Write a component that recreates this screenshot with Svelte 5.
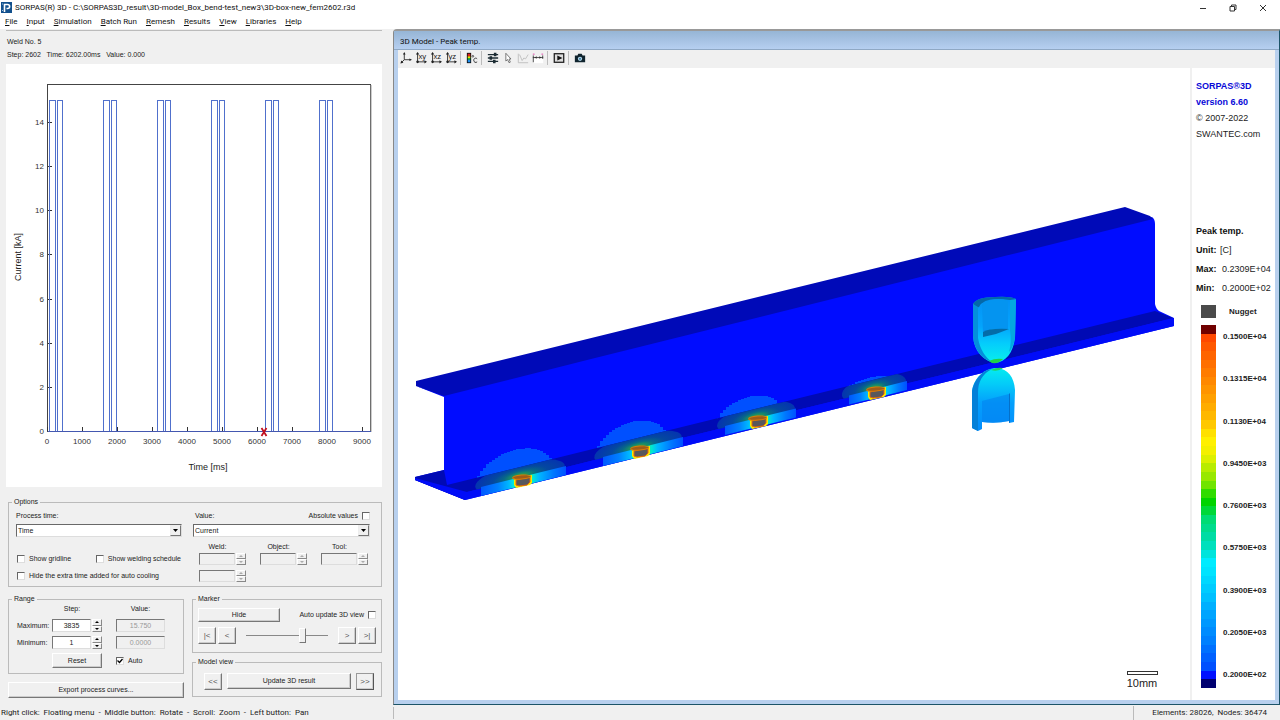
<script>
  // Menu titles as [access key, rest of the word]
  const menus = [
    ['F', 'ile'], ['I', 'nput'], ['S', 'imulation'], ['B', 'atch Run'], ['R', 'emesh'],
    ['R', 'esults'], ['V', 'iew'], ['L', 'ibraries'], ['H', 'elp']
  ];

  // Process curve
  const px = (ms) => 47 + ms * 0.035;
  const py = (ka) => 432 - ka * 22.07;
  const xTicks = [0, 1000, 2000, 3000, 4000, 5000, 6000, 7000, 8000, 9000];
  const yTicks = [0, 2, 4, 6, 8, 10, 12, 14];
  const pulses = [0, 1, 2, 3, 4, 5].flatMap((i) => [
    { x: 49.5 + i * 54, w: 6 },
    { x: 57.5 + i * 54, w: 5 }
  ]);

  // Heat plumes, stepped like the mesh
  function plume(cx, cy, rx, ry) {
    const pts = [];
    for (let x = -rx; x <= rx; x += 3) {
      const h = ry * Math.sqrt(Math.max(0, 1 - (x * x) / (rx * rx)));
      const y = Math.round(cy - 0.247 * x - h);
      pts.push(`${cx + x},${y}`, `${cx + x + 3},${y}`);
    }
    pts.push(`${cx + rx},${cy + 14}`, `${cx - rx},${cy + 14}`);
    return pts.join(' ');
  }
  const welds = [
    { x: 523, y: 481, left: 42, right: 43, plume: plume(513, 478, 39, 28) },
    { x: 641, y: 452, left: 38, right: 42, plume: plume(630, 449, 36, 27) },
    { x: 759, y: 422, left: 34, right: 37, plume: plume(747, 420, 33, 23) },
    { x: 877, y: 393, left: 28, right: 30, plume: plume(867, 389, 27, 11) }
  ];
  const edge = (w, dx, dy) => `${w.x + dx} ${(w.y - 4.5 - dx * 0.247 + dy).toFixed(1)}`;

  const scale = [
    '#700000', '#ff4800', '#ff5800', '#ff6400', '#ff7000', '#ff7c00', '#ff8800', '#ff9400', '#ffa000',
    '#ffac00', '#ffb800', '#ffc800', '#ffe000', '#fff000', '#f4f000', '#dcf000', '#b8ec00', '#98e800',
    '#70e400', '#30dc00', '#00d400', '#00d838', '#00dc74', '#00dc8c', '#00dca4', '#00e0bc', '#00e4dc',
    '#00ecff', '#00e4ff', '#00d8ff', '#00ccff', '#00c0ff', '#00b0ff', '#00a4ff', '#0098ff', '#008cff',
    '#0080ff', '#0070ff', '#0060ff', '#0050ff', '#0010ff', '#000070'
  ];
  const scaleLabels = [
    '0.1500E+04', '0.1315E+04', '0.1130E+04', '0.9450E+03', '0.7600E+03',
    '0.5750E+03', '0.3900E+03', '0.2050E+03', '0.2000E+02'
  ];
</script>

{#snippet spinner(label, value, disabled)}
  <span class="spinner" class:disabled>
    <input type="text" aria-label={label} {value} {disabled} />
    <span class="arrows">
      <button {disabled} aria-label="{label} up"><svg viewBox="0 0 6 4"><path d="M1 3L3 1L5 3Z" /></svg></button>
      <button {disabled} aria-label="{label} down"><svg viewBox="0 0 6 4"><path d="M1 1L3 3L5 1Z" /></svg></button>
    </span>
  </span>
{/snippet}

{#snippet plane(label)}
  <svg viewBox="0 0 14 14">
    <path d="M3 1.5V11.5H12.5" fill="none" stroke="#222" stroke-width="1" />
    <path d="M3 0L1 3H5ZM14 11.5L11 9.5V13.5Z" fill="#222" />
    <circle cx="3" cy="11.5" r="1.5" fill="#222" />
    <text x="4" y="8" font-size="9" fill="#222">{label}</text>
  </svg>
{/snippet}

<div class="app">
  <header class="titlebar">
    <svg class="logo" viewBox="0 0 11 11">
      <rect width="11" height="11" fill="#12508c" />
      <path d="M3.5 10V2.5H6.5C9.3 2.5 9.3 6.5 6.5 6.5H5.5" fill="none" stroke="#fff" stroke-width="1.6" />
      <path d="M1 2H2M1 8.5H2" stroke="#9cc4e8" />
    </svg>
    <h1>SORPAS(R) 3D - C:\SORPAS3D_result\3D-model_Box_bend-test_new3\3D-box-new_fem2602.r3d</h1>
    <div class="window-buttons">
      <button aria-label="Minimize"><svg viewBox="0 0 8 8"><path d="M1 4.5H7" /></svg></button>
      <button aria-label="Restore"><svg viewBox="0 0 8 8"><path d="M1 2.5H5.5V7H1ZM2.5 2.5V1H7V5.5H5.5" /></svg></button>
      <button aria-label="Close"><svg viewBox="0 0 8 8"><path d="M1 1L7 7M7 1L1 7" /></svg></button>
    </div>
  </header>

  <nav class="menubar">
    {#each menus as [key, rest]}
      <button><u>{key}</u>{rest}</button>
    {/each}
  </nav>

  <main>
    <section class="process">
      <div class="info">
        <p>Weld No. 5</p>
        <p>Step: 2602&nbsp;&nbsp; Time: 6202.00ms&nbsp;&nbsp; Value: 0.000</p>
      </div>

      <div class="chart">
        <svg viewBox="6 64 376 423">
          <rect x="47.5" y="84.5" width="323" height="347" fill="none" stroke="#444" />
          <path d="M371 85V432" stroke="#999" />
          {#each yTicks as t}
            <path d="M48 {Math.round(py(t)) - 0.5}h4" stroke="#333" />
            <text x="44" y={py(t) + 2} text-anchor="end">{t}</text>
          {/each}
          {#each xTicks as t}
            <path d="M{Math.round(px(t)) + 0.5} 431v-4" stroke="#333" />
            <text x={px(t)} y="444" text-anchor="middle">{t}</text>
          {/each}
          {#each pulses as p}
            <rect x={p.x} y="100.5" width={p.w} height="331" fill="none" stroke="#5070cc" />
          {/each}
          <path d="M48 431.5H371" stroke="#4458b0" />
          <path d="M261.5 428L266.5 436M266.5 428L261.5 436" stroke="#c01020" stroke-width="1.8" />
          <text class="axis" x="208" y="470" text-anchor="middle">Time [ms]</text>
          <text class="axis" transform="translate(21 257) rotate(-90)" text-anchor="middle">Current [kA]</text>
        </svg>
      </div>

      <fieldset class="options">
        <legend>Options</legend>
        <div class="option-cols">
          <div class="col">
            <label class="caption" for="process-time">Process time:</label>
            <span class="dropdown">
              <select id="process-time"><option>Time</option></select>
              <span class="drop"><svg viewBox="0 0 7 5"><path d="M1 1H6L3.5 4Z" /></svg></span>
            </span>
            <div class="checks">
              <label class="check"><input type="checkbox" />Show gridline</label>
              <label class="check"><input type="checkbox" />Show welding schedule</label>
            </div>
            <label class="check"><input type="checkbox" />Hide the extra time added for auto cooling</label>
          </div>
          <div class="col">
            <div class="value-head">
              <label class="caption" for="value-kind">Value:</label>
              <label class="check">Absolute values<input type="checkbox" /></label>
            </div>
            <span class="dropdown">
              <select id="value-kind"><option>Current</option></select>
              <span class="drop"><svg viewBox="0 0 7 5"><path d="M1 1H6L3.5 4Z" /></svg></span>
            </span>
            <div class="selectors">
              <span class="head">Weld:</span><span class="head">Object:</span><span class="head">Tool:</span>
              {@render spinner('Weld', '', true)}
              {@render spinner('Object', '', true)}
              {@render spinner('Tool', '', true)}
            </div>
            <div class="selectors">{@render spinner('Weld end', '', true)}</div>
          </div>
        </div>
      </fieldset>

      <div class="lower">
        <div class="stack">
          <fieldset>
            <legend>Range</legend>
            <div class="range">
              <span></span><span class="head">Step:</span><span class="head">Value:</span>
              <span>Maximum:</span>{@render spinner('Maximum step', '3835', false)}
              <input class="readout" aria-label="Maximum value" value="15.750" disabled />
              <span>Minimum:</span>{@render spinner('Minimum step', '1', false)}
              <input class="readout" aria-label="Minimum value" value="0.0000" disabled />
              <span></span><button class="push">Reset</button>
              <label class="check"><input type="checkbox" checked />Auto</label>
            </div>
          </fieldset>
          <button class="push export">Export process curves...</button>
        </div>
        <div class="stack">
          <fieldset>
            <legend>Marker</legend>
            <div class="marker">
              <div class="row">
                <button class="push hide">Hide</button>
                <label class="check">Auto update 3D view<input type="checkbox" /></label>
              </div>
              <div class="row">
                <span class="pair"><button class="push step">|&lt;</button><button class="push step">&lt;</button></span>
                <input class="slider" type="range" min="0" max="100" value="70" aria-label="Marker position" />
                <span class="pair"><button class="push step">&gt;</button><button class="push step">&gt;|</button></span>
              </div>
            </div>
          </fieldset>
          <fieldset>
            <legend>Model view</legend>
            <div class="model">
              <button class="push step">&lt;&lt;</button>
              <button class="push update">Update 3D result</button>
              <button class="push step strong">&gt;&gt;</button>
            </div>
          </fieldset>
        </div>
      </div>
    </section>

    <section class="viewer">
      <h2>3D Model - Peak temp.</h2>
      <div class="toolbar">
        <button aria-label="3D view">
          <svg viewBox="0 0 14 14"><path d="M5 1.5V9H12M5 9L2 12" fill="none" stroke="#222" /><path d="M5 0L3.5 3H6.5ZM14 9L11 7.5V10.5ZM0.5 13.5L1.5 10L4 12.5Z" fill="#222" /></svg>
        </button>
        <button aria-label="XY view">{@render plane('xy')}</button>
        <button aria-label="XZ view">{@render plane('xz')}</button>
        <button aria-label="YZ view">{@render plane('yz')}</button>
        <i></i>
        <button aria-label="Temperature scale">
          <svg viewBox="0 0 14 14">
            <rect x="1" y="1" width="5" height="12" fill="#111" /><rect x="2" y="2" width="3" height="3" fill="#e02020" />
            <rect x="2" y="5" width="3" height="2" fill="#f0e000" /><rect x="2" y="7" width="3" height="2" fill="#20c030" /><rect x="2" y="9" width="3" height="3" fill="#2090f0" />
            <circle cx="8" cy="5" r="1" fill="none" stroke="#222" stroke-width=".8" /><path d="M13 8C11 6 9 8 9 9.5C9 12 11.5 13 13 11.5" fill="none" stroke="#222" />
          </svg>
        </button>
        <i></i>
        <button aria-label="Settings">
          <svg viewBox="0 0 14 14"><path d="M1 3H13M1 7H13M1 11H13" stroke="#1c2c34" stroke-width="1.5" /><path d="M8 1h3v4h-3ZM3 5h3v4h-3ZM7 9h3v4h-3Z" fill="#1c2c34" /></svg>
        </button>
        <button aria-label="Select">
          <svg viewBox="0 0 14 14"><path d="M4.5 1.5V10.5L6.5 8.8L8.2 12.5L9.7 11.8L8.2 8.2H10.5Z" fill="#fff" stroke="#666" /></svg>
        </button>
        <button aria-label="Curve">
          <svg viewBox="0 0 14 14"><path d="M1.5 2V12.5H13M3 3L6 10L8 7L10 8L13 3" fill="none" stroke="#bbb" /></svg>
        </button>
        <button aria-label="Measure">
          <svg viewBox="0 0 14 14"><rect x="1" y="7" width="12" height="6" fill="#fff" /><path d="M1.5 4V12M12.5 4V8M1 6.5H13" stroke="#333" fill="none" /><path d="M3 6.5L5.5 5V8ZM11 6.5L8.5 5V8Z" fill="#333" /><path d="M1 2.5H3M11 2.5H13" stroke="#e030a0" /></svg>
        </button>
        <i></i>
        <button aria-label="Play">
          <svg viewBox="0 0 14 14"><rect x="1.5" y="2" width="11" height="10" fill="#ddd" stroke="#222" stroke-width="1.5" /><path d="M5 4L11 7L5 10Z" fill="#111" /></svg>
        </button>
        <i></i>
        <button aria-label="Snapshot">
          <svg viewBox="0 0 14 14"><path d="M1 4H4L5 2H9L10 4H13V12H1Z" fill="#10242e" /><circle cx="7" cy="8" r="2.5" fill="#b8dcf0" /><circle cx="7" cy="8" r="1.2" fill="#3a7a9c" /></svg>
        </button>
      </div>

      <div class="stage">
        <svg class="scene" viewBox="398 68 792 632">
          <defs>
            <linearGradient id="front">
              <stop offset="0" stop-color="#0058ff" /><stop offset=".2" stop-color="#0080ff" />
              <stop offset=".33" stop-color="#00b8ff" /><stop offset=".38" stop-color="#00e8e0" />
              <stop offset=".5" stop-color="#40f060" /><stop offset=".61" stop-color="#00e8d0" />
              <stop offset=".68" stop-color="#00b8ff" /><stop offset=".85" stop-color="#0078ff" /><stop offset="1" stop-color="#0050ff" />
            </linearGradient>
            <radialGradient id="glow">
              <stop offset="0" stop-color="#58a030" /><stop offset=".2" stop-color="#188c68" />
              <stop offset=".36" stop-color="#086888" /><stop offset=".6" stop-color="#0448a0" /><stop offset="1" stop-color="#0434b0" />
            </radialGradient>
            <linearGradient id="upper" x2="0" y2="1">
              <stop offset="0" stop-color="#0490f4" /><stop offset=".45" stop-color="#04a4fc" />
              <stop offset=".7" stop-color="#04ccfc" /><stop offset="1" stop-color="#08f0ec" />
            </linearGradient>
            <linearGradient id="lower" x2="0" y2="1">
              <stop offset="0" stop-color="#04ecf0" /><stop offset=".25" stop-color="#04ccf8" />
              <stop offset=".55" stop-color="#04a0fc" /><stop offset="1" stop-color="#048cfc" />
            </linearGradient>
            <clipPath id="flange-clip"><path d="M415 477L444 470L447 485L690 425L950 361L1155 311L1173 318L950 373L690 436L467 492Z" /></clipPath>
            <clipPath id="web-clip"><path d="M444 396L1155 219V311L950 363L690 427L447 487Z" /></clipPath>
          </defs>

          <path d="M416 386L444 394L1152 217Q1155 219 1155 224V304Q1156 309 1159 311L1174 318V326L465 500L415 480V477L444 470V397Z" fill="#000cff" />
          <path d="M416 381L1125 207L1150 216L1153 219L591 359L444 396L416 386Z" fill="#000ab8" />
          <g clip-path="url(#web-clip)">
            {#each welds as w}
              <polygon points={w.plume} fill="#0050ff" />
            {/each}
          </g>
          <path d="M415 477L444 470L447 485L690 425L950 361L1155 311L1173 318L950 373L690 436L467 492L465 500L415 480Z" fill="#000ab4" />
          <path d="M415 478L467 492L465 500L415 480ZM467 492L690 436L950 373L1174 318V326L465 500Z" fill="#000cf8" />

          <g clip-path="url(#flange-clip)">
            {#each welds as w}
              <ellipse cx={w.x - 3} cy={w.y - 5} rx={w.right + 3} ry="13" transform="rotate(-14 {w.x - 3} {w.y - 5})" fill="url(#glow)" />
            {/each}
          </g>
          {#each welds as w}
            <path d="M{edge(w, -w.left, 0)}L{edge(w, w.right, 0)}L{edge(w, w.right, 9)}L{edge(w, -w.left, 9)}Z" fill="url(#front)" />
            <path d="M{w.x - 9} {w.y - 3}L{w.x + 9} {w.y - 6}V{w.y + 2}L{w.x + 7} {w.y + 4}L{w.x - 7} {w.y + 7}L{w.x - 9} {w.y + 4}Z" fill="#f8e800" />
            <path d="M{w.x - 7} {w.y - 1}L{w.x + 7} {w.y - 4}V{w.y + 1}L{w.x + 4} {w.y + 4}L{w.x - 4} {w.y + 5}L{w.x - 7} {w.y + 4}Z" fill="#58585c" stroke="#e06010" />
            <ellipse cx={w.x - 1} cy={w.y - 4} rx="9" ry="2" transform="rotate(-5 {w.x} {w.y})" fill="#a05c18" stroke="#d87c08" />
          {/each}

          <path d="M973 304Q977 297 995 297Q1010 296 1016 299L1015 338C1013 353 1006 362 995 363C984 361 974 352 973 336Z" fill="url(#upper)" />
          <path d="M973 304Q977 297 995 297Q1010 296 1016 299L1010 300Q984 296 979 307Q975 308 973 304Z" fill="#0468a8" />
          <path d="M973 304L978 307V338C980 350 986 358 992 362C982 359 974 350 973 336Z" fill="#0490dc" />
          <path d="M1010 300H1016L1015 338Q1013 348 1009 352Q1012 342 1010 330Z" fill="#04a8e0" />
          <path d="M982 304Q996 296 1008 301V329H992L983 333Z" fill="#0494f0" />
          <path d="M983 332Q989 328 1009 329L996 334L983 337Z" fill="#046ca8" />
          <path d="M989 361Q995 358 1003 359Q999 364 992 363Z" fill="#20d048" />

          <path d="M972 428V391C974 378 984 368 997 368C1008 369 1014 377 1015 390L1014 422L1009 423V421Q996 424 982 422V429L978 431Z" fill="url(#lower)" />
          <path d="M972 428V391C974 380 982 370 992 369C982 374 978 382 978 393V431Z" fill="#0480d8" />
          <path d="M982 401L1009 394V421Q996 424 982 422Z" fill="#0484f0" opacity=".6" />
          <path d="M1009 394V423L1010 422V393Z" fill="#0470c8" />
          <path d="M991 370Q997 367 1003 368Q998 372 991 370Z" fill="#20d060" />

          <rect x="1127.5" y="671.5" width="30" height="3" fill="#fff" stroke="#333" />
          <text x="1142" y="687" text-anchor="middle" font-size="11" fill="#222">10mm</text>
        </svg>

        <aside>
          <div class="brand">
            <strong>SORPAS®3D</strong><strong>version 6.60</strong>
            <span>© 2007-2022</span><span>SWANTEC.com</span>
          </div>
          <dl>
            <dt class="wide">Peak temp.</dt>
            <dt>Unit:</dt><dd class="unit">[C]</dd>
            <dt>Max:</dt><dd>0.2309E+04</dd>
            <dt>Min:</dt><dd>0.2000E+02</dd>
          </dl>
          <div class="nugget"><span></span><b>Nugget</b></div>
          <div class="scale">
            <div class="bar">{#each scale as c}<span style="background:{c}"></span>{/each}</div>
            <div class="labels">{#each scaleLabels as l}<b>{l}</b>{/each}</div>
          </div>
        </aside>
      </div>
    </section>
  </main>

  <footer>
    <span class="hint">Right click:&nbsp; Floating menu&nbsp; -&nbsp; Middle button:&nbsp; Rotate&nbsp; -&nbsp; Scroll:&nbsp; Zoom&nbsp; -&nbsp; Left button:&nbsp; Pan</span>
    <span class="cell"></span>
    <span class="counts">Elements: 28026,&nbsp; Nodes: 36474</span>
  </footer>
</div>

<style>
  :global(body) { margin: 0; }
  * { box-sizing: border-box; }
  .app {
    display: flex;
    flex-direction: column;
    min-height: 100vh;
    background: #f0f0f0;
    color: #222;
    font: 7px/10px 'Liberation Sans', Arial, sans-serif;
  }
  button, input, select { font: inherit; color: inherit; margin: 0; padding: 0; border: 0; border-radius: 0; }
  h1, h2, p, dl, dd { margin: 0; }
  svg { display: block; }

  .titlebar, .menubar { display: flex; align-items: center; background: #fff; }
  .titlebar, .menubar, footer, h2 { font: 8px/14px Roboto, 'Noto Sans', sans-serif; }
  .titlebar { height: 15px; padding-left: 1px; }
  .logo { width: 11px; height: 11px; }
  h1 { font: inherit; margin-left: 3px; flex: 1; color: #111; }
  .window-buttons { display: flex; padding-right: 2px; }
  .window-buttons button { width: 30px; height: 14px; display: grid; place-items: center; background: none; }
  .window-buttons svg { width: 8px; height: 8px; fill: none; stroke: #333; }
  .menubar { height: 14px; gap: 9px; padding-left: 5px; }
  .menubar button { background: none; color: #111; }

  main { flex: 1; display: grid; grid-template-columns: minmax(393px, 30.7%) 1fr; }
  .process { display: flex; flex-direction: column; padding: 1px 11px 8px 6px; }
  .info { border-top: 1px solid #bbb; padding: 4px 1px 3px; line-height: 13px; }
  .chart { flex: 1; display: flex; min-height: 300px; background: #fff; margin-bottom: 10px; }
  .chart svg { flex: 1; contain: size; }
  svg text { font-family: 'Liberation Sans', Arial, sans-serif; }
  .chart text { font-size: 8px; fill: #333; }
  .chart .axis { font-size: 9px; fill: #222; }

  fieldset { margin: 0; padding: 0; min-width: 0; border: 1px solid #bbb; }
  legend { margin-left: 3px; padding: 0 2px; height: 10px; }
  .options { margin-left: 2px; }
  .option-cols { display: grid; grid-template-columns: 166fr 177fr; column-gap: 11px; padding: 4px 11px 4px 7px; }
  .col { display: flex; flex-direction: column; min-width: 0; }
  .value-head { display: flex; justify-content: space-between; height: 10px; }
  .caption { padding-left: 2px; }
  .col > .caption { padding-left: 0; }
  .dropdown { display: flex; height: 13px; margin-top: 3px; background: #fff; border: 1px solid; border-color: #696969 #ddd #ddd #696969; }
  select { flex: 1; min-width: 0; appearance: none; background: #fff; padding-left: 1px; line-height: 11px; }
  .drop { width: 11px; display: grid; place-items: center; background: #f0f0f0; border: 1px solid; border-color: #eee #777 #777 #eee; }
  .drop svg { width: 7px; height: 5px; }
  .check { display: flex; align-items: center; gap: 4px; white-space: nowrap; }
  .col > .check { height: 12px; margin-top: 5px; padding-left: 1px; gap: 4px; }
  .checks { display: flex; justify-content: space-between; height: 12px; margin-top: 16px; padding: 0 1px; }
  input[type='checkbox'] { appearance: none; flex: none; width: 8px; height: 8px; background: #fff; border: 1px solid; border-color: #666 #ddd #ddd #666; }
  input[type='checkbox']:checked {
    background: #fff url("data:image/svg+xml,%3Csvg xmlns='http://www.w3.org/2000/svg' viewBox='0 0 6 6'%3E%3Cpath d='M.5 2.5L2.5 4.5L5.5 1' fill='none' stroke='%23000' stroke-width='1.3'/%3E%3C/svg%3E");
  }
  .selectors { display: grid; grid-template-columns: repeat(3, 47px); justify-content: space-between; margin-top: 5px; padding: 0 2px 0 6px; }
  .head { text-align: center; height: 11px; padding-right: 10px; }
  .spinner { display: flex; height: 12px; gap: 1px; }
  .spinner input { flex: 1; min-width: 0; width: 0; text-align: center; background: #fff; border: 1px solid; border-color: #777 #ddd #ddd #777; }
  .spinner.disabled input { background: #f0f0f0; }
  .arrows { display: grid; width: 10px; grid-template-rows: 1fr 1fr; }
  .arrows button { display: grid; place-items: center; min-height: 0; background: #f0f0f0; border: 1px solid; border-color: #fff #888 #888 #fff; }
  .arrows svg { width: 6px; height: 4px; }
  .disabled .arrows svg { fill: #aaa; }

  .lower { display: grid; grid-template-columns: 176fr 190fr; column-gap: 8px; margin: 7px 0 0 2px; }
  .stack { display: flex; flex-direction: column; row-gap: 8px; }
  .stack + .stack { row-gap: 4px; }
  .push { background: #f0f0f0; border: 1px solid; border-color: #fff #777 #777 #fff; box-shadow: inset -1px -1px #ccc; text-align: center; }
  .range { display: grid; grid-template-columns: 35px 50px 63px; grid-template-rows: 11px 13px 13px 15px; row-gap: 4px; padding: 0 8px 5px; align-items: center; justify-content: start; }
  .range > :nth-child(3n) { margin-left: 14px; width: 49px; }
  .range .push, .range .spinner { height: 100%; }
  .readout { height: 100%; text-align: center; color: #999; background: #f0f0f0; border: 1px solid; border-color: #777 #ddd #ddd #777; }
  .range > .head:nth-child(3n) { padding-right: 0; }
  .export { height: 16px; }
  .marker { display: flex; flex-direction: column; gap: 5px; padding: 4px 5px 8px; }
  .row { display: flex; justify-content: space-between; align-items: center; }
  .hide { width: 82px; height: 14px; }
  .pair { display: flex; gap: 2px; }
  .step { width: 18px; height: 17px; color: #555; font-size: 8px; }
  .slider { appearance: none; width: 82px; height: 16px; background: linear-gradient(#888, #888) center / 100% 1px no-repeat; }
  .slider::-webkit-slider-thumb { appearance: none; width: 7px; height: 15px; background: #f0f0f0; border: 1px solid; border-color: #fff #777 #777 #fff; }
  .model { display: flex; gap: 5px; padding: 6px 7px 6px 11px; }
  .update { flex: 1; height: 16px; }
  .strong { border-color: #999 #555 #555 #999; }

  .viewer { display: flex; flex-direction: column; min-width: 0; border: 1px solid; border-color: #999 #1c5468 #1c5468 #888; border-top-width: 2px; border-top-left-radius: 4px; background: #b8d0ee; padding: 0 4px 4px; margin-bottom: 1px; }
  h2 { height: 19px; line-height: 21px; margin: 0 -4px; padding-left: 6px; background: linear-gradient(#96b5d5, #b6cff0); color: #111; border-bottom: 1px solid #8fa8c4; }
  .toolbar { display: flex; align-items: center; height: 18px; padding-bottom: 2px; background: #f0f0f0; }
  .toolbar button { width: 15px; height: 16px; display: grid; place-items: center; background: none; }
  .toolbar svg { width: 12px; height: 12px; }
  .toolbar i { width: 1px; height: 14px; margin: 0 3px 0 2px; background: #bbb; }
  .stage { flex: 1; display: flex; min-height: 0; background: #fff; }
  .scene { flex: 1; min-width: 0; contain: size; }
  aside { flex: 0 0 85px; border-left: 2px solid #f0f0f0; display: flex; flex-direction: column; padding: 10px 0 12px 4px; font: 9px/16px 'Liberation Sans', Arial, sans-serif; }
  .brand { display: flex; flex-direction: column; height: 144px; }
  .brand strong { color: #0808d8; }
  dl { display: grid; grid-template-columns: 26px 1fr; line-height: 19px; }
  dt { font-weight: bold; color: #111; }
  .wide { grid-column: 1 / 3; }
  .unit { margin-left: -2px; }
  .nugget { display: flex; align-items: center; height: 13px; margin: 7px 0; padding-left: 5px; font-size: 8px; }
  .nugget span { width: 15px; height: 13px; background: #4a4a4a; margin-right: 13px; }
  .scale { flex: 1; display: flex; gap: 7px; padding-left: 5px; font-size: 8px; line-height: 10px; }
  .bar { width: 15px; display: flex; flex-direction: column; }
  .bar span { flex: 1; }
  .labels { display: flex; flex-direction: column; justify-content: space-between; padding: 7px 0 8px; }

  footer { display: flex; height: 14px; }
  .hint { flex: 0 0 max(393px, 30.7%); padding-left: 1px; white-space: nowrap; }
  .cell { flex: 1; border-left: 1px solid #bbb; margin: 1px 0; }
  .counts { padding: 0 13px 0 18px; border-left: 1px solid #bbb; white-space: nowrap; }
</style>
